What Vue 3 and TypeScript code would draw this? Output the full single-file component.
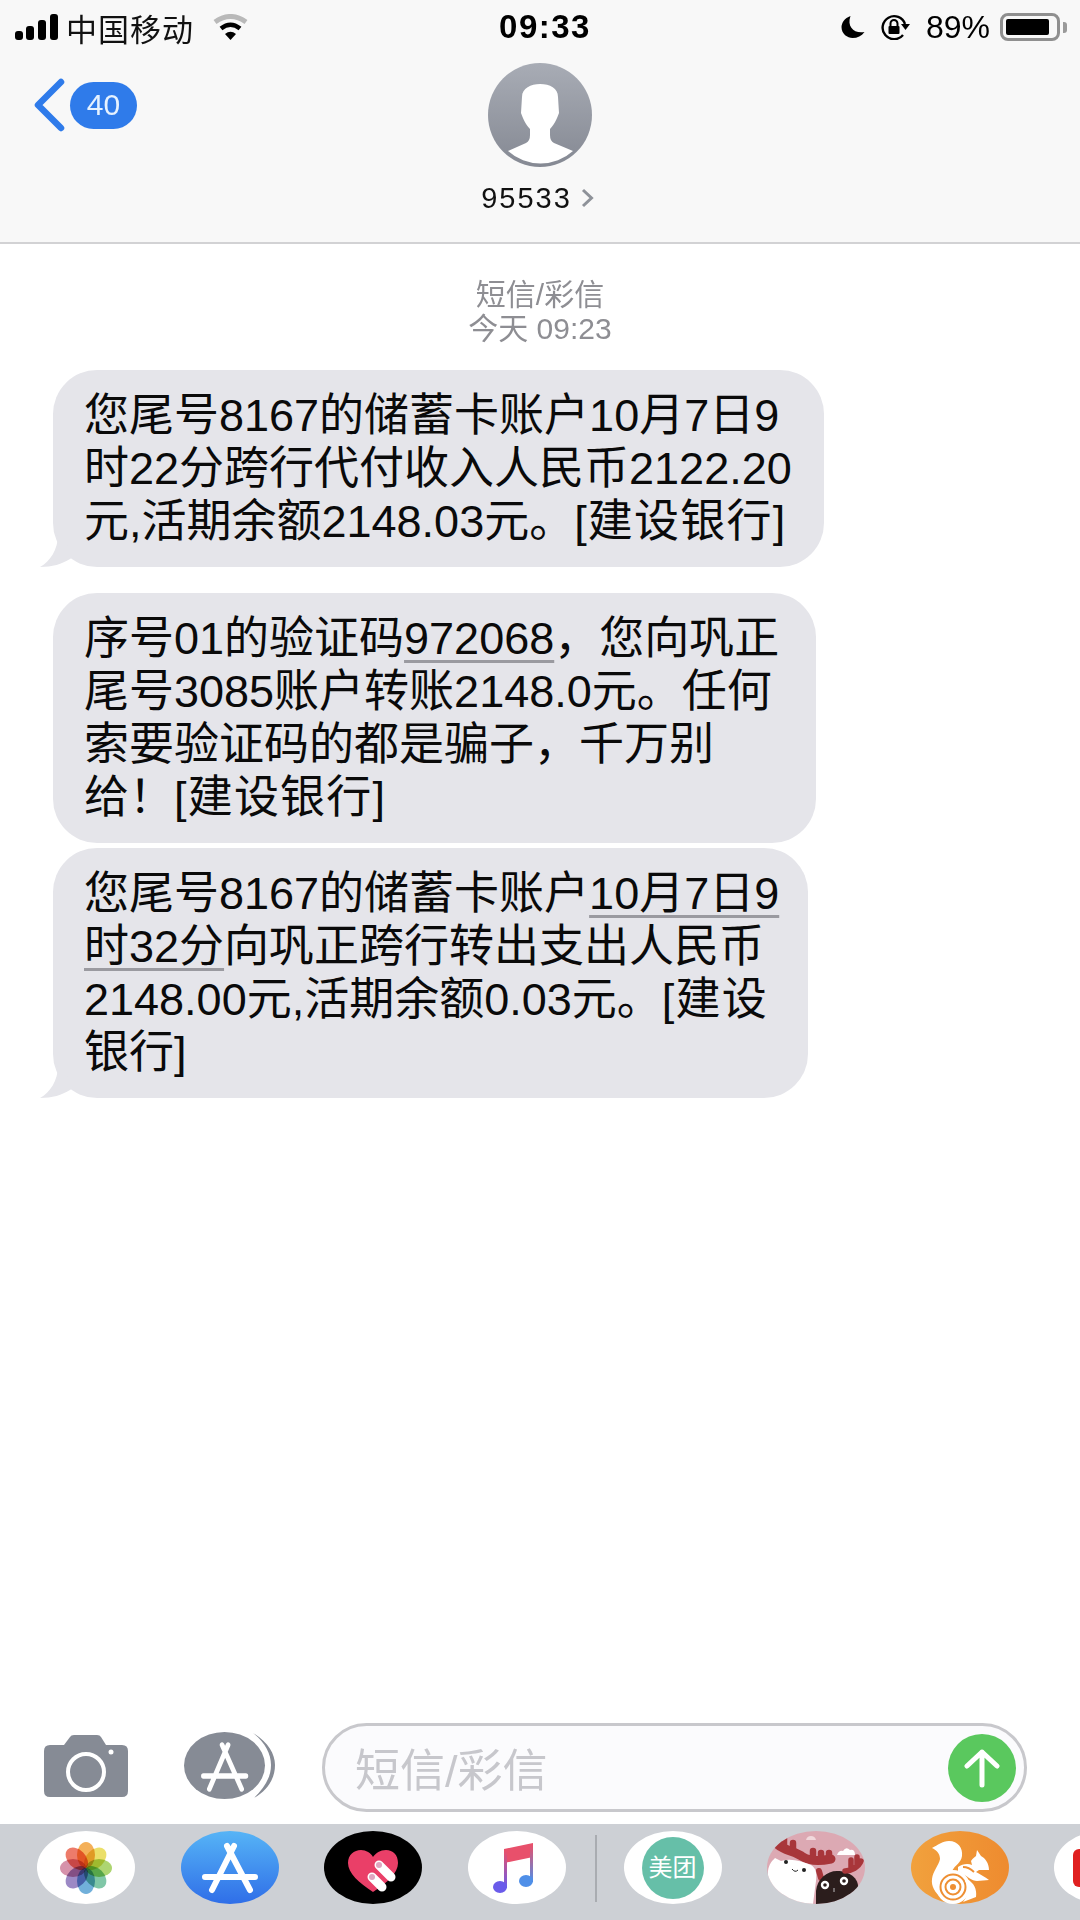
<script setup lang="ts">
interface Segment {
  text: string
  link?: boolean
  tag?: boolean
}

interface Message {
  width: number
  tail: boolean
  lines: Segment[][]
}

const messages: Message[] = [
  {
    width: 771,
    tail: true,
    lines: [
      [{ text: '您尾号8167的储蓄卡账户10月7日9' }],
      [{ text: '时22分跨行代付收入人民币2122.20' }],
      [{ text: '元,活期余额2148.03元。' }, { text: '[建设银行]', tag: true }],
    ],
  },
  {
    width: 763,
    tail: false,
    lines: [
      [{ text: '序号01的验证码' }, { text: '972068', link: true }, { text: '，您向巩正' }],
      [{ text: '尾号3085账户转账2148.0元。任何' }],
      [{ text: '索要验证码的都是骗子，千万别' }],
      [{ text: '给！' }, { text: '[建设银行]', tag: true }],
    ],
  },
  {
    width: 755,
    tail: true,
    lines: [
      [{ text: '您尾号8167的储蓄卡账户' }, { text: '10月7日9', link: true }],
      [{ text: '时32分', link: true }, { text: '向巩正跨行转出支出人民币' }],
      [{ text: '2148.00元,活期余额0.03元。' }, { text: '[建设', tag: true }],
      [{ text: '银行]' }],
    ],
  },
]

const petals = ['#f3a23c', '#e8da50', '#9fce58', '#69bd98', '#58a2d4', '#8b74bb', '#cf7f9c', '#ea6450']
const appGlyph = 'M46 15 L69 59 M53 15 L31 59 M24 46 H74'
</script>

<template>
  <div class="phone">
    <header class="top">
      <div class="status">
        <div class="status-left">
          <svg class="signal" width="43" height="26" viewBox="0 0 43 26">
            <rect x="0" y="17" width="8" height="9" rx="3" />
            <rect x="11" y="12" width="8" height="14" rx="3" />
            <rect x="23" y="6" width="8" height="20" rx="3" />
            <rect x="35" y="0" width="8" height="26" rx="3" />
          </svg>
          <span class="carrier">中国移动</span>
          <svg class="wifi" width="35" height="26" viewBox="0 0 35 26" fill="none">
            <path d="M2 8 Q17.5 -3 33 8" stroke="#b9b9b9" stroke-width="5" />
            <path d="M8 14.5 Q17.5 7 27 14.5" stroke="#000" stroke-width="4.5" />
            <path d="M12 20 Q17.5 15.5 23 20 L17.5 26 Z" fill="#000" />
          </svg>
        </div>
        <span class="clock">09:33</span>
        <div class="status-right">
          <svg width="25" height="24" viewBox="0 0 24 24">
            <path d="M10 1 C4 3 1 8 1 12 C1 19 7 23 12 23 C17 23 21 21 24 17 C14 19 6 12 10 1 Z" />
          </svg>
          <svg class="rotation" width="30" height="26" viewBox="0 0 30 26" fill="none">
            <path d="M25 10 A11.5 11.5 0 1 0 23 21" stroke="#000" stroke-width="2.4" />
            <path d="M21 10 H30 L25.5 16 Z" fill="#000" />
            <rect x="8.5" y="12" width="11" height="8" rx="1" fill="#000" />
            <path d="M10.5 12 V9.5 A3.5 3.5 0 0 1 17.5 9.5 V12" stroke="#000" stroke-width="2" />
          </svg>
          <span class="percent">89%</span>
          <div class="battery">
            <div class="battery-shell"><div class="battery-fill"></div></div>
            <div class="battery-tip"></div>
          </div>
        </div>
      </div>

      <div class="nav">
        <div class="back">
          <svg width="31" height="54" viewBox="0 0 31 54" fill="none">
            <path d="M27 4 L4 27 L27 50" stroke="#2f7bea" stroke-width="6.5" stroke-linecap="round" stroke-linejoin="round" />
          </svg>
          <span class="badge">40</span>
        </div>
        <div class="contact">
          <svg class="avatar" width="104" height="104" viewBox="0 0 104 104">
            <defs>
              <linearGradient id="avatarFill" x1="0" y1="0" x2="0" y2="1">
                <stop offset="0" stop-color="#a8acb5" />
                <stop offset="1" stop-color="#858993" />
              </linearGradient>
            </defs>
            <circle cx="52" cy="52" r="52" fill="url(#avatarFill)" />
            <path
              d="M20 88 L38 80 Q42 78 42 72 L42 66 C37 61 35 55 33 50 L34 34 C34 25 43 21 52 21 C62 21 70 25 70 34 L71 50 C69 55 67 61 62 66 L62 72 Q62 78 66 80 L85 88 A48.5 48.5 0 0 1 20 88 Z"
              fill="#fff"
            />
          </svg>
          <div class="number">
            <span>95533</span>
            <svg width="13" height="20" viewBox="0 0 13 20" fill="none">
              <path d="M2 2 L10.5 10 L2 18" stroke="#8e9299" stroke-width="3" />
            </svg>
          </div>
        </div>
      </div>
    </header>

    <main class="thread">
      <div class="meta">
        <div>短信/彩信</div>
        <div>今天 09:23</div>
      </div>
      <div class="bubbles">
        <div v-for="(msg, i) in messages" :key="i" class="bubble" :style="{ width: msg.width + 'px' }">
          <div v-for="(line, j) in msg.lines" :key="j" class="line">
            <span v-for="(seg, k) in line" :key="k" :class="{ link: seg.link, tag: seg.tag }">{{ seg.text }}</span>
          </div>
          <svg v-if="msg.tail" class="tail" width="36" height="32" viewBox="0 0 36 32">
            <path d="M18 0 C18 14 10 27 0 32 C12 32 22 29 30 24 L36 20 Z" fill="#e5e5ea" />
          </svg>
        </div>
      </div>
    </main>

    <section class="composer">
      <svg class="camera" width="84" height="62" viewBox="0 0 84 62">
        <path
          d="M6 10 H20 L26 2 Q27 0 30 0 H53 Q56 0 57 2 L62 10 H78 Q84 10 84 16 V56 Q84 62 78 62 H6 Q0 62 0 56 V16 Q0 10 6 10 Z"
          fill="#868b95"
        />
        <rect x="8" y="5" width="9" height="3" fill="#fff" opacity="0.5" />
        <circle cx="42" cy="37" r="18" fill="none" stroke="#fff" stroke-width="4" />
        <circle cx="67" cy="17" r="2.5" fill="#fff" />
      </svg>
      <svg class="apps" width="91" height="67" viewBox="0 0 91 67">
        <ellipse cx="40.5" cy="33.5" rx="40.5" ry="33.5" fill="#868b95" />
        <path d="M69 1 C84 10 91 22 91 33 C91 46 84 58 70 66 C81 55 87 45 87 33 C87 22 81 10 69 1 Z" fill="#868b95" />
        <path :d="appGlyph" transform="translate(-1 -2) scale(0.85 1)" stroke="#fff" stroke-width="5.5" stroke-linecap="round" fill="none" />
      </svg>
      <div class="input">
        <span class="placeholder">短信/彩信</span>
        <div class="send">
          <svg width="36" height="40" viewBox="0 0 36 40" fill="none">
            <path d="M18 37 V4 M3 18 L18 4 L33 18" stroke="#fff" stroke-width="5" stroke-linecap="round" stroke-linejoin="round" />
          </svg>
        </div>
      </div>
    </section>

    <footer class="dock">
      <div class="dock-group">
        <svg class="dock-icon" viewBox="0 0 98 73">
          <ellipse cx="49" cy="36.5" rx="49" ry="36.5" fill="#fff" />
          <ellipse
            v-for="(color, i) in petals"
            :key="color"
            class="petal"
            cx="49"
            cy="24"
            rx="9"
            ry="13"
            :fill="color"
            :transform="`rotate(${i * 45} 49 37)`"
          />
        </svg>

        <svg class="dock-icon" viewBox="0 0 98 73">
          <defs>
            <linearGradient id="storeFill" x1="0" y1="0" x2="0" y2="1">
              <stop offset="0" stop-color="#56b4f6" />
              <stop offset="1" stop-color="#2f6ee8" />
            </linearGradient>
          </defs>
          <ellipse cx="49" cy="36.5" rx="49" ry="36.5" fill="url(#storeFill)" />
          <path :d="appGlyph" stroke="#fff" stroke-width="6" stroke-linecap="round" fill="none" />
        </svg>

        <svg class="dock-icon" viewBox="0 0 98 73">
          <ellipse cx="49" cy="36.5" rx="49" ry="36.5" fill="#000" />
          <path d="M49 61 C35 52 24 42 24 32 C24 24 30 19 37 19 C42 19 47 22 49 26 C52 22 56 19 62 19 C69 19 74 24 74 32 C74 42 63 52 49 61 Z" fill="#ea3f68" />
          <path d="M48 46 L58 56 M55 34 L67 46" stroke="#fff" stroke-width="9" stroke-linecap="round" />
          <circle cx="48" cy="46" r="3" fill="#dfa6c0" />
          <circle cx="55" cy="34" r="3" fill="#dfa6c0" />
        </svg>

        <svg class="dock-icon" viewBox="0 0 98 73">
          <defs>
            <linearGradient id="noteLeft" x1="0" y1="0" x2="0" y2="1">
              <stop offset="0" stop-color="#e8506b" />
              <stop offset="1" stop-color="#6a5bea" />
            </linearGradient>
            <linearGradient id="noteRight" x1="0" y1="0" x2="0" y2="1">
              <stop offset="0" stop-color="#e8506b" />
              <stop offset="1" stop-color="#4f8fe8" />
            </linearGradient>
          </defs>
          <ellipse cx="49" cy="36.5" rx="49" ry="36.5" fill="#fff" />
          <path d="M36 18 L65 12 V26 L36 32 Z" fill="#e8506b" />
          <rect x="36" y="20" width="3" height="37" fill="url(#noteLeft)" />
          <rect x="62" y="14" width="3" height="37" fill="url(#noteRight)" />
          <ellipse cx="32" cy="56" rx="7" ry="6" fill="#6a5bea" />
          <ellipse cx="58" cy="50" rx="7" ry="6" fill="#4f8fe8" />
        </svg>
      </div>

      <div class="dock-divider"></div>

      <div class="dock-group">
        <div class="dock-icon meituan">
          <span>美团</span>
        </div>

        <svg class="dock-icon" viewBox="0 0 98 73">
          <clipPath id="mooseClip"><ellipse cx="49" cy="36.5" rx="49" ry="36.5" /></clipPath>
          <g clip-path="url(#mooseClip)">
            <rect width="98" height="73" fill="#dca9b3" />
            <path d="M70 24 q2 -5 6 -4 q3 -5 7 -1 q5 -1 5 5 Z" fill="#fff" />
            <path d="M39 9 q1 -4 5 -4 q4 0 5 4 Z" fill="#f1d8dc" />
            <path d="M10 13 C18 20 28 20 36 26 C44 31 54 30 64 28" stroke="#a8363a" stroke-width="9" stroke-linecap="round" fill="none" />
            <path d="M17 7 L17 15 M26 12 L26 20 M46 20 L46 28 M54 22 L54 30 M62 22 L62 28" stroke="#a8363a" stroke-width="6.5" stroke-linecap="round" />
            <path d="M1 40 C2 33 5 30 8 27 L14 30 C24 27 34 30 44 34 C49 37 50 42 49 50 L46 73 H22 C12 68 0 60 1 40 Z" fill="#fff" />
            <circle cx="19" cy="31" r="2" fill="#222" />
            <circle cx="37" cy="39" r="2" fill="#222" />
            <path d="M25 38 Q28 42 31 39" stroke="#222" stroke-width="1" fill="none" />
            <path d="M52 40 L54 47" stroke="#a8363a" stroke-width="6" stroke-linecap="round" />
            <path d="M49 73 V60 C50 48 60 40 70 40 C82 40 92 47 91 57 C90 64 86 70 80 73 Z" fill="#2b1d1c" />
            <path d="M78 40 C84 40 92 36 94 30 M84 29 L84 38 M90 26 L90 35" stroke="#a8363a" stroke-width="5.5" stroke-linecap="round" fill="none" />
            <circle cx="58" cy="54" r="3" fill="#2b1d1c" stroke="#fff" stroke-width="2.4" />
            <circle cx="77" cy="50" r="3" fill="#2b1d1c" stroke="#fff" stroke-width="2.4" />
            <path d="M67 57 V61" stroke="#bbb" stroke-width="1" />
          </g>
        </svg>

        <svg class="dock-icon" viewBox="0 0 98 73">
          <defs>
            <linearGradient id="ucFill" x1="0" y1="0" x2="1" y2="0">
              <stop offset="0" stop-color="#f1a13d" />
              <stop offset="1" stop-color="#ee8b2f" />
            </linearGradient>
          </defs>
          <ellipse cx="49" cy="36.5" rx="49" ry="36.5" fill="url(#ucFill)" />
          <path d="M21 17 C27 14 31 10 38 10 C47 10 52 17 51 25 C50 32 44 34 41 40 L32 46 C28 52 28 60 31 67 C24 62 20 55 21 48 C22 40 28 34 29 28 C29 22 25 19 21 17 Z" fill="#fff" />
          <circle cx="42" cy="56" r="17" fill="#fff" />
          <circle cx="42" cy="56" r="12.5" fill="none" stroke="#ee8f33" stroke-width="2" />
          <circle cx="42" cy="56" r="7.5" fill="none" stroke="#ee8f33" stroke-width="2" />
          <circle cx="42" cy="56" r="3" fill="#ee8f33" />
          <path d="M47 36 C51 33 57 32 61 34 L60 30 C62 27 64 26 65 25 L66 19 L70 25 C74 27 78 32 78 39 L68 39 L65 41 C69 43 74 46 78 49 L66 50 C61 50 56 45 47 40 Z" fill="#fff" />
          <path d="M52 36 C56 36 60 38 63 41" stroke="#ee8f33" stroke-width="1.8" fill="none" />
          <path d="M56 48 C63 52 66 58 65 66 L52 71 C58 64 58 56 54 50 Z" fill="#fff" />
        </svg>

        <svg class="dock-icon" viewBox="0 0 98 73">
          <ellipse cx="49" cy="36.5" rx="49" ry="36.5" fill="#fff" />
          <rect x="19" y="18" width="60" height="38" rx="6" fill="#e02020" />
        </svg>
      </div>
    </footer>
  </div>
</template>

<style scoped>
.phone {
  width: 1080px;
  height: 1920px;
  display: flex;
  flex-direction: column;
  background: #fff;
  overflow: hidden;
  font-family: "Liberation Sans", "Noto Sans CJK SC", sans-serif;
  color: #000;
}

.top {
  height: 244px;
  box-sizing: border-box;
  background: #f8f8f8;
  border-bottom: 2px solid #d2d2d4;
  flex-shrink: 0;
}

.status {
  height: 54px;
  display: grid;
  grid-template-columns: 1fr auto 1fr;
  align-items: center;
  padding: 0 13px 0 15px;
}

.status-left,
.status-right {
  display: flex;
  align-items: center;
}

.status-right {
  justify-content: flex-end;
}

.carrier {
  font-size: 31px;
  letter-spacing: 1px;
  margin-left: 8px;
  margin-right: 19px;
  color: #111;
}

.clock {
  font-size: 33px;
  font-weight: 700;
  letter-spacing: 1.5px;
  margin-left: 8px;
}

.rotation {
  margin-left: 15px;
}

.percent {
  font-size: 32px;
  margin-left: 16px;
  margin-right: 10px;
}

.battery {
  display: flex;
  align-items: center;
  gap: 3px;
}

.battery-shell {
  width: 60px;
  height: 28px;
  box-sizing: border-box;
  border: 3px solid #8f8f8f;
  border-radius: 8px;
  padding: 3px;
}

.battery-fill {
  width: 89%;
  height: 100%;
  background: #000;
  border-radius: 2px;
}

.battery-tip {
  width: 4px;
  height: 11px;
  background: #9a9a9a;
  border-radius: 0 3px 3px 0;
}

.nav {
  display: grid;
  grid-template-columns: 1fr auto 1fr;
  padding-top: 9px;
}

.back {
  display: flex;
  align-items: center;
  align-self: start;
  margin: 15px 0 0 34px;
}

.badge {
  width: 67px;
  height: 47px;
  margin-left: 5px;
  border-radius: 24px;
  background: #2f7bea;
  color: #e6f2ff;
  font-size: 30px;
  display: flex;
  align-items: center;
  justify-content: center;
}

.contact {
  display: flex;
  flex-direction: column;
  align-items: center;
}

.number {
  display: flex;
  align-items: center;
  gap: 9px;
  margin-top: 14px;
  margin-left: -5px;
  font-size: 29px;
  line-height: 34px;
  letter-spacing: 2px;
  color: #111;
}

.thread {
  flex: 1;
  padding-top: 34px;
}

.meta {
  text-align: center;
  font-size: 30px;
  line-height: 34px;
  color: #8e8e93;
}

.bubbles {
  margin: 24px 0 0 53px;
  display: flex;
  flex-direction: column;
  gap: 5px;
}

.bubble {
  position: relative;
  box-sizing: border-box;
  padding: 19px 0 19px 31px;
  border-radius: 44px;
  background: #e5e5ea;
  font-size: 45px;
  line-height: 53px;
  white-space: nowrap;
  color: #0a0a0a;
}

.bubble:first-child {
  margin-bottom: 21px;
}

.link {
  text-decoration: underline;
  text-decoration-color: #9a9aa0;
  text-decoration-thickness: 3px;
  text-decoration-skip-ink: none;
  text-underline-offset: 6px;
}

.tag {
  letter-spacing: 1.2px;
}

.tail {
  position: absolute;
  left: -13px;
  bottom: 0;
}

.composer {
  height: 101px;
  flex-shrink: 0;
  display: flex;
  align-items: flex-start;
  padding: 0 53px 0 44px;
}

.camera {
  margin-top: 12px;
  flex-shrink: 0;
}

.apps {
  margin: 9px 47px 0 56px;
  flex-shrink: 0;
}

.input {
  flex: 1;
  height: 89px;
  box-sizing: border-box;
  border: 3px solid #c8c8cc;
  border-radius: 45px;
  background: #fbfbfd;
  display: flex;
  align-items: center;
  justify-content: space-between;
  padding: 0 8px 0 30px;
}

.placeholder {
  font-size: 45px;
  color: #c7c7cc;
}

.send {
  width: 68px;
  height: 68px;
  border-radius: 50%;
  background: #5ac85e;
  display: flex;
  align-items: center;
  justify-content: center;
}

.dock {
  height: 96px;
  flex-shrink: 0;
  box-sizing: border-box;
  background: #cdd0d5;
  display: flex;
  align-items: flex-start;
  gap: 27px;
  padding: 7px 0 0 37px;
}

.dock-group {
  display: flex;
  gap: 45.5px;
  flex-shrink: 0;
}

.dock-icon {
  width: 98px;
  height: 73px;
  flex-shrink: 0;
  display: block;
}

.dock-divider {
  width: 2px;
  height: 67px;
  margin: 4px 0 0 2px;
  background: #a9acb1;
  flex-shrink: 0;
}

.petal {
  opacity: 0.85;
  mix-blend-mode: multiply;
}

.meituan {
  border-radius: 50%;
  background: #fff;
  display: flex;
  align-items: center;
  justify-content: center;
}

.meituan span {
  width: 62px;
  height: 62px;
  border-radius: 50%;
  background: #66bfa8;
  color: #fff;
  font-size: 24px;
  line-height: 62px;
  text-align: center;
  white-space: nowrap;
}
</style>
